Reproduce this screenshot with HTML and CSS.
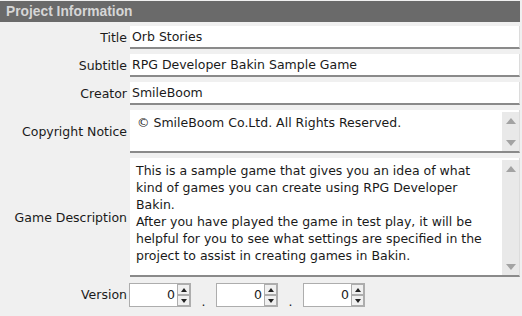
FILE: index.html
```html
<!DOCTYPE html>
<html lang="en">
<head>
  <meta charset="UTF-8">
  <title>Project Information</title>
  <link rel="stylesheet" href="styles.css">
</head>
<body>
  <div class="header">Project Information</div>
  <div class="form">
    <div class="label">Title</div>
    <div class="field line">Orb Stories</div>

    <div class="label">Subtitle</div>
    <div class="field line">RPG Developer Bakin Sample Game</div>

    <div class="label">Creator</div>
    <div class="field line">SmileBoom</div>

    <div class="label">Copyright Notice</div>
    <div class="field area copyright">
      <div class="text">© SmileBoom Co.Ltd. All Rights Reserved.</div>
      <div class="scroll"><span class="up"></span><span class="down"></span></div>
    </div>

    <div class="label">Game Description</div>
    <div class="field area description">
      <div class="text">This is a sample game that gives you an idea of what<br>kind of games you can create using RPG Developer<br>Bakin.<br>After you have played the game in test play, it will be<br>helpful for you to see what settings are specified in the<br>project to assist in creating games in Bakin.</div>
      <div class="scroll"><span class="up"></span><span class="down"></span></div>
    </div>

    <div class="label">Version</div>
    <div class="version">
      <div class="spin"><span class="num">0</span><span class="btns"><span class="btn"><i class="tri-up"></i></span><span class="btn"><i class="tri-down"></i></span></span></div>
      <span class="dot">.</span>
      <div class="spin"><span class="num">0</span><span class="btns"><span class="btn"><i class="tri-up"></i></span><span class="btn"><i class="tri-down"></i></span></span></div>
      <span class="dot">.</span>
      <div class="spin"><span class="num">0</span><span class="btns"><span class="btn"><i class="tri-up"></i></span><span class="btn"><i class="tri-down"></i></span></span></div>
    </div>
  </div>
</body>
</html>
```

FILE: styles.css
```css
body {
  margin: 0;
  padding: 0;
  background-color: #f0f0f0;
  font-family: "DejaVu Sans", sans-serif;
  font-size: 12.5px;
  color: #1a1a1a;
}

.header {
  margin-top: 1px;
  width: 514px;
  height: 21px;
  padding-left: 6px;
  background-color: #6a6a6a;
  color: #d6d6d6;
  font-family: "Liberation Sans", Arial, sans-serif;
  font-weight: bold;
  font-size: 13.8px;
  line-height: 22px;
}

.form {
  display: grid;
  grid-template-columns: 127px 390px;
  column-gap: 3px;
  row-gap: 5px;
  margin-top: 4px;
}

.label {
  display: flex;
  align-items: center;
  justify-content: flex-end;
}

.field {
  background-color: #fff;
  border-bottom: 2px solid #8a8a8a;
  border-right: 1px solid #dcdcdc;
  box-sizing: border-box;
}

.field.line {
  height: 23px;
  line-height: 22px;
  padding-left: 2px;
}

.field.area {
  display: flex;
}

.copyright {
  height: 43px;
}

.description {
  height: 119px;
}

.text {
  flex: 1;
  padding: 4px 0 0 6px;
  line-height: 17px;
  white-space: nowrap;
}

.copyright .text {
  padding-left: 7px;
}

.scroll {
  width: 17px;
  margin: 2px 0 0;
  background-color: #e9e9e9;
  display: flex;
  flex-direction: column;
  justify-content: space-between;
  align-items: center;
  padding: 6px 0 5px;
}

.up, .down {
  width: 0;
  height: 0;
  border-left: 5px solid transparent;
  border-right: 5px solid transparent;
}

.up {
  border-bottom: 6px solid #a3a3a3;
}

.down {
  border-top: 6px solid #a3a3a3;
}

.version {
  display: flex;
  align-items: center;
  height: 24px;
  margin-top: 1px;
  margin-left: -1px;
}

.spin {
  display: flex;
  width: 62px;
  height: 24px;
  box-sizing: border-box;
  border: 1px solid #adadad;
  background-color: #fff;
}

.num {
  flex: 1;
  text-align: right;
  line-height: 22px;
  padding-right: 2px;
}

.btns {
  width: 13px;
  display: flex;
  flex-direction: column;
}

.btn {
  flex: 1;
  border: 1px solid #adadad;
  background-color: #f0f0f0;
  display: flex;
  align-items: center;
  justify-content: center;
}

.tri-up, .tri-down {
  width: 0;
  height: 0;
  border-left: 3px solid transparent;
  border-right: 3px solid transparent;
}

.tri-up {
  border-bottom: 4px solid #222;
}

.tri-down {
  border-top: 4px solid #222;
}

.dot {
  width: 25px;
  text-align: center;
  padding-top: 12px;
}
```
